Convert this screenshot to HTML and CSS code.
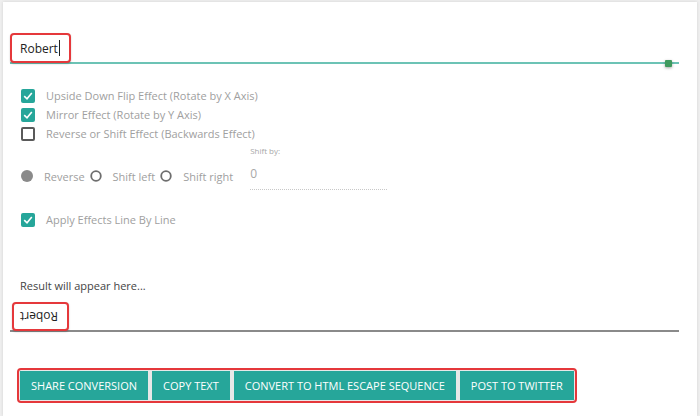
FILE: index.html
```html
<!DOCTYPE html>
<html lang="en">
  <head>
    <meta charset="UTF-8" />
    <title>Upside Down Text</title>
    <link rel="stylesheet" href="styles.css">
  </head>
  <body>
    <div class="card">
      <div class="source">
        <div class="field">
          <span class="mark mark-source">Robert<span class="caret"></span></span>
        </div>
        <span class="thumb"></span>
      </div>

      <ul class="options">
        <li><span class="box checked"><svg viewBox="0 0 14 14"><path d="M3.2 7.2 L6 9.8 L10.8 4" /></svg></span>Upside Down Flip Effect (Rotate by X Axis)</li>
        <li><span class="box checked"><svg viewBox="0 0 14 14"><path d="M3.2 7.2 L6 9.8 L10.8 4" /></svg></span>Mirror Effect (Rotate by Y Axis)</li>
        <li><span class="box"></span>Reverse or Shift Effect (Backwards Effect)</li>
      </ul>

      <div class="shift-row">
        <div class="radios">
          <span class="radio-option"><svg class="radio" viewBox="0 0 12 12"><circle cx="6" cy="6" r="6" class="dot" /></svg>Reverse</span>
          <span class="radio-option"><svg class="radio" viewBox="0 0 12 12"><circle cx="6" cy="6" r="4.8" class="ring" /></svg>Shift left</span>
          <span class="radio-option"><svg class="radio" viewBox="0 0 12 12"><circle cx="6" cy="6" r="4.8" class="ring" /></svg>Shift right</span>
        </div>
        <div class="shift-by">
          <label>Shift by:</label>
          <div class="shift-input">0</div>
        </div>
      </div>

      <ul class="options line-by-line">
        <li><span class="box checked"><svg viewBox="0 0 14 14"><path d="M3.2 7.2 L6 9.8 L10.8 4" /></svg></span>Apply Effects Line By Line</li>
      </ul>

      <p class="result-label">Result will appear here...</p>
      <div class="output">
        <span class="mark mark-output"><span class="flipped">Robert</span></span>
      </div>

      <div class="actions">
        <button>Share Conversion</button>
        <button>Copy Text</button>
        <button>Convert to HTML Escape Sequence</button>
        <button>Post to Twitter</button>
      </div>
    </div>
  </body>
</html>
```

FILE: styles.css
```css
body {
  margin: 0;
  background: #efefef;
  font-family: 'Open Sans', 'Noto Sans', sans-serif;
  font-size: 11px;
  color: #333;
}

.card {
  margin: 2px 3px 0 3px;
  height: 414px;
  background: #fff;
  box-shadow: 0 0 3px rgba(0, 0, 0, 0.12);
  padding: 31px 18px 0 7px;
  box-sizing: border-box;
}

.source {
  position: relative;
}

.field {
  display: flex;
  border-bottom: 2px solid #6cc3b5;
}

.mark {
  display: inline-flex;
  align-items: center;
  border: 2px solid #e5383b;
  border-radius: 4px;
  box-shadow: 0 1px 2px rgba(0, 0, 0, 0.2);
  background: #fff;
}

.mark-source {
  height: 26px;
  padding: 0 9px 0 8px;
  margin-bottom: -1px;
  font-size: 12px;
  color: #222;
}

.caret {
  display: inline-block;
  width: 1px;
  height: 16px;
  background: #222;
  margin-left: 1px;
}

.thumb {
  position: absolute;
  right: 7px;
  bottom: -3px;
  width: 7px;
  height: 7px;
  border-radius: 1px;
  background: #3f9a5e;
  box-shadow: 0 1px 3px rgba(0, 0, 0, 0.35);
}

.options {
  list-style: none;
  margin: 22px 0 0 11px;
  padding: 0;
  color: #a0a0a0;
}

.options li {
  display: flex;
  align-items: center;
  height: 19px;
}

.box {
  width: 14px;
  height: 14px;
  box-sizing: border-box;
  border: 2px solid #5a5a5a;
  border-radius: 2px;
  margin-right: 11px;
  flex-shrink: 0;
}

.box.checked {
  border: none;
  background: #26a69a;
}

.box svg {
  display: block;
  width: 14px;
  height: 14px;
  fill: none;
  stroke: #fff;
  stroke-width: 1.6;
}

.shift-row {
  display: flex;
  align-items: flex-end;
  margin: 2px 0 0 11px;
  color: #a0a0a0;
}

.radios {
  display: flex;
  align-items: center;
  gap: 5px;
  height: 22px;
  margin-bottom: 3px;
}

.radio-option {
  display: flex;
  align-items: center;
  gap: 11px;
  white-space: nowrap;
}

.radio {
  display: block;
  flex-shrink: 0;
  width: 12px;
  height: 12px;
}

.radio .dot {
  fill: #8a8a8a;
}

.radio .ring {
  fill: #fff;
  stroke: #6e6e6e;
  stroke-width: 1.8;
}

.shift-by {
  margin-left: 17px;
  width: 137px;
}

.shift-by label {
  display: block;
  font-size: 8px;
  color: #a8a8a8;
  margin-bottom: 9px;
}

.shift-input {
  height: 20px;
  font-size: 12px;
  color: #a8a8a8;
  border-bottom: 1px dotted #c8c8c8;
  padding-bottom: 4px;
}

.line-by-line {
  margin-top: 20px;
}

.result-label {
  margin: 49px 0 0 10px;
  color: #444;
  font-size: 11px;
}

.output {
  display: flex;
  margin-top: 9px;
  border-bottom: 2px solid #8a8a8a;
}

.mark-output {
  height: 25px;
  padding: 0 9px 0 6px;
  margin-left: 2px;
  margin-bottom: -1px;
  font-size: 12px;
  color: #222;
}

.flipped {
  display: inline-block;
  transform: rotate(180deg);
}

.actions {
  display: inline-flex;
  gap: 4px;
  margin: 36px 0 0 7px;
  padding: 1px;
  border: 2px solid #e5383b;
  border-radius: 4px;
  background: #e8e8e8;
}

.actions button {
  height: 29px;
  padding: 0 11px;
  border: none;
  background: #26a69a;
  color: #fff;
  font-family: 'Open Sans', 'Noto Sans', sans-serif;
  font-size: 11px;
  text-transform: uppercase;
  cursor: pointer;
}
```
